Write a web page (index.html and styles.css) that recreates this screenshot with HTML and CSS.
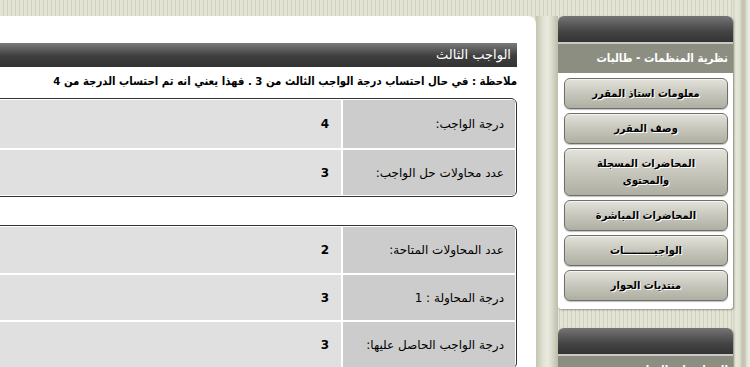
FILE: index.html
```html
<!DOCTYPE html>
<html dir="rtl" lang="ar">
<head>
<meta charset="utf-8">
<title>الواجب الثالث</title>
<link rel="stylesheet" href="styles.css">
</head>
<body>
<div class="layout">
  <div class="edge"></div>
  <aside class="sidebar">
    <section class="box">
      <div class="box-head"></div>
      <div class="box-title">نظرية المنظمات - طالبات</div>
      <nav class="box-body">
        <a class="btn">معلومات استاذ المقرر</a>
        <a class="btn">وصف المقرر</a>
        <a class="btn">المحاضرات المسجلة والمحتوى</a>
        <a class="btn">المحاضرات المباشرة</a>
        <a class="btn">الواجبـــــــــات</a>
        <a class="btn">منتديات الحوار</a>
      </nav>
    </section>
    <section class="box">
      <div class="box-head"></div>
      <div class="box-title">المحاضرات المباشرة</div>
    </section>
  </aside>
  <div class="gutter"></div>
  <main class="content">
    <h1 class="title-bar">الواجب الثالث</h1>
    <p class="note">ملاحظة : في حال احتساب درجة الواجب الثالث من 3 . فهذا يعني انه تم احتساب الدرجة من 4</p>
    <div class="table">
      <div class="row tall"><div class="label">درجة الواجب:</div><div class="value">4</div></div>
      <div class="row"><div class="label">عدد محاولات حل الواجب:</div><div class="value">3</div></div>
    </div>
    <div class="table second">
      <div class="row first"><div class="label">عدد المحاولات المتاحة:</div><div class="value">2</div></div>
      <div class="row"><div class="label">درجة المحاولة : 1</div><div class="value">3</div></div>
      <div class="row"><div class="label">درجة الواجب الحاصل عليها:</div><div class="value">3</div></div>
    </div>
  </main>
</div>
</body>
</html>
```
FILE: styles.css
```css
html, body {
  margin: 0;
  padding: 0;
  height: 100%;
  overflow: hidden;
}
body {
  font-family: "DejaVu Sans", sans-serif;
  background: repeating-linear-gradient(to right, #e4e4d5 0 3px, #cfd0be 3px 4px);
  color: #000;
}
.layout {
  display: flex;
  align-items: stretch;
  height: 367px;
}
.edge {
  flex: 0 0 17px;
  background: linear-gradient(to right, #d4d4c4 0, #e6e6da 3px, #e0e0d2 7px, #c3c3b3 9px, #c8c8b8 12px, #e2e2d6 14px, #eeeee5 17px);
}
.sidebar {
  flex: 0 0 175px;
  margin-top: 16px;
  display: flex;
  flex-direction: column;
  gap: 19px;
}
.box {
  flex-shrink: 0;
  background: #fff;
  border-radius: 6px 6px 3px 3px;
  box-shadow: 1px 1px 2px rgba(0,0,0,0.35), -1px 0 0 rgba(0,0,0,0.12);
  overflow: hidden;
}
.box-head {
  height: 26px;
  background: linear-gradient(#747474, #444 60%, #333);
  border-bottom: 2px solid #c9c9c5;
}
.box-title {
  height: 29px;
  line-height: 29px;
  background: #8d8e82;
  color: #fff;
  font-family: "DejaVu Sans Condensed", "DejaVu Sans", sans-serif;
  font-weight: bold;
  font-size: 11.5px;
  padding-right: 5px;
  white-space: nowrap;
  overflow: hidden;
}
.box-body {
  padding: 5px 5px 8px 6px;
  display: flex;
  flex-direction: column;
  gap: 4px;
}
.btn {
  display: block;
  border: 1px solid #6f6f6a;
  border-radius: 6px;
  background: linear-gradient(#e3e3dc, #c9c9bf 45%, #aeaea2);
  box-shadow: inset 0 1px 0 #f4f4ee, 0 1px 1px rgba(0,0,0,0.25);
  padding: 6px 10px;
  line-height: 17px;
  text-align: center;
  font-family: "DejaVu Sans Condensed", "DejaVu Sans", sans-serif;
  font-weight: bold;
  font-size: 11px;
  color: #000;
  text-shadow: 1px 1px 0 #fff;
}
.gutter {
  flex: 0 0 22px;
  margin-top: 16px;
  background: linear-gradient(to right, #c3c4b2 0, #d0d1bf 3px, #e2e2d4 7px, #e9e9de 12px, #dadacb 16px, #c6c6b6 20px, #bdbdac 22px);
}
.content {
  flex: 0 0 1000px;
  margin-top: 16px;
  background: #fff;
  border-top-right-radius: 8px;
  padding: 27px 19px 0 0;
  box-sizing: border-box;
}
.title-bar {
  margin: 0;
  height: 24px;
  line-height: 24px;
  font-size: 13px;
  font-weight: normal;
  color: #fff;
  padding-right: 6px;
  border-radius: 5px 0 0 5px;
  background: linear-gradient(#7a7a7a, #3e3e3e 55%, #333);
}
.note {
  margin: 7px 0 0;
  height: 16px;
  line-height: 16px;
  font-family: "DejaVu Sans Condensed", "DejaVu Sans", sans-serif;
  font-size: 11.3px;
  font-weight: bold;
  white-space: nowrap;
}
.table {
  margin-top: 8px;
  border: 1px solid #333;
  border-radius: 6px;
  padding: 1px;
  display: grid;
  gap: 2px;
  background: #fff;
}
.table.second {
  margin-top: 28px;
}
.row {
  display: grid;
  grid-template-columns: 172px 1fr;
  gap: 2px;
  height: 45px;
}
.row.tall { height: 48px; }
.row.first { height: 46px; }
.label, .value {
  display: flex;
  align-items: center;
  font-size: 12px;
}
.label {
  background: #cccccc;
  padding-right: 11px;
}
.value {
  background: #e0e0e0;
  padding-right: 12px;
  font-weight: bold;
}
```
